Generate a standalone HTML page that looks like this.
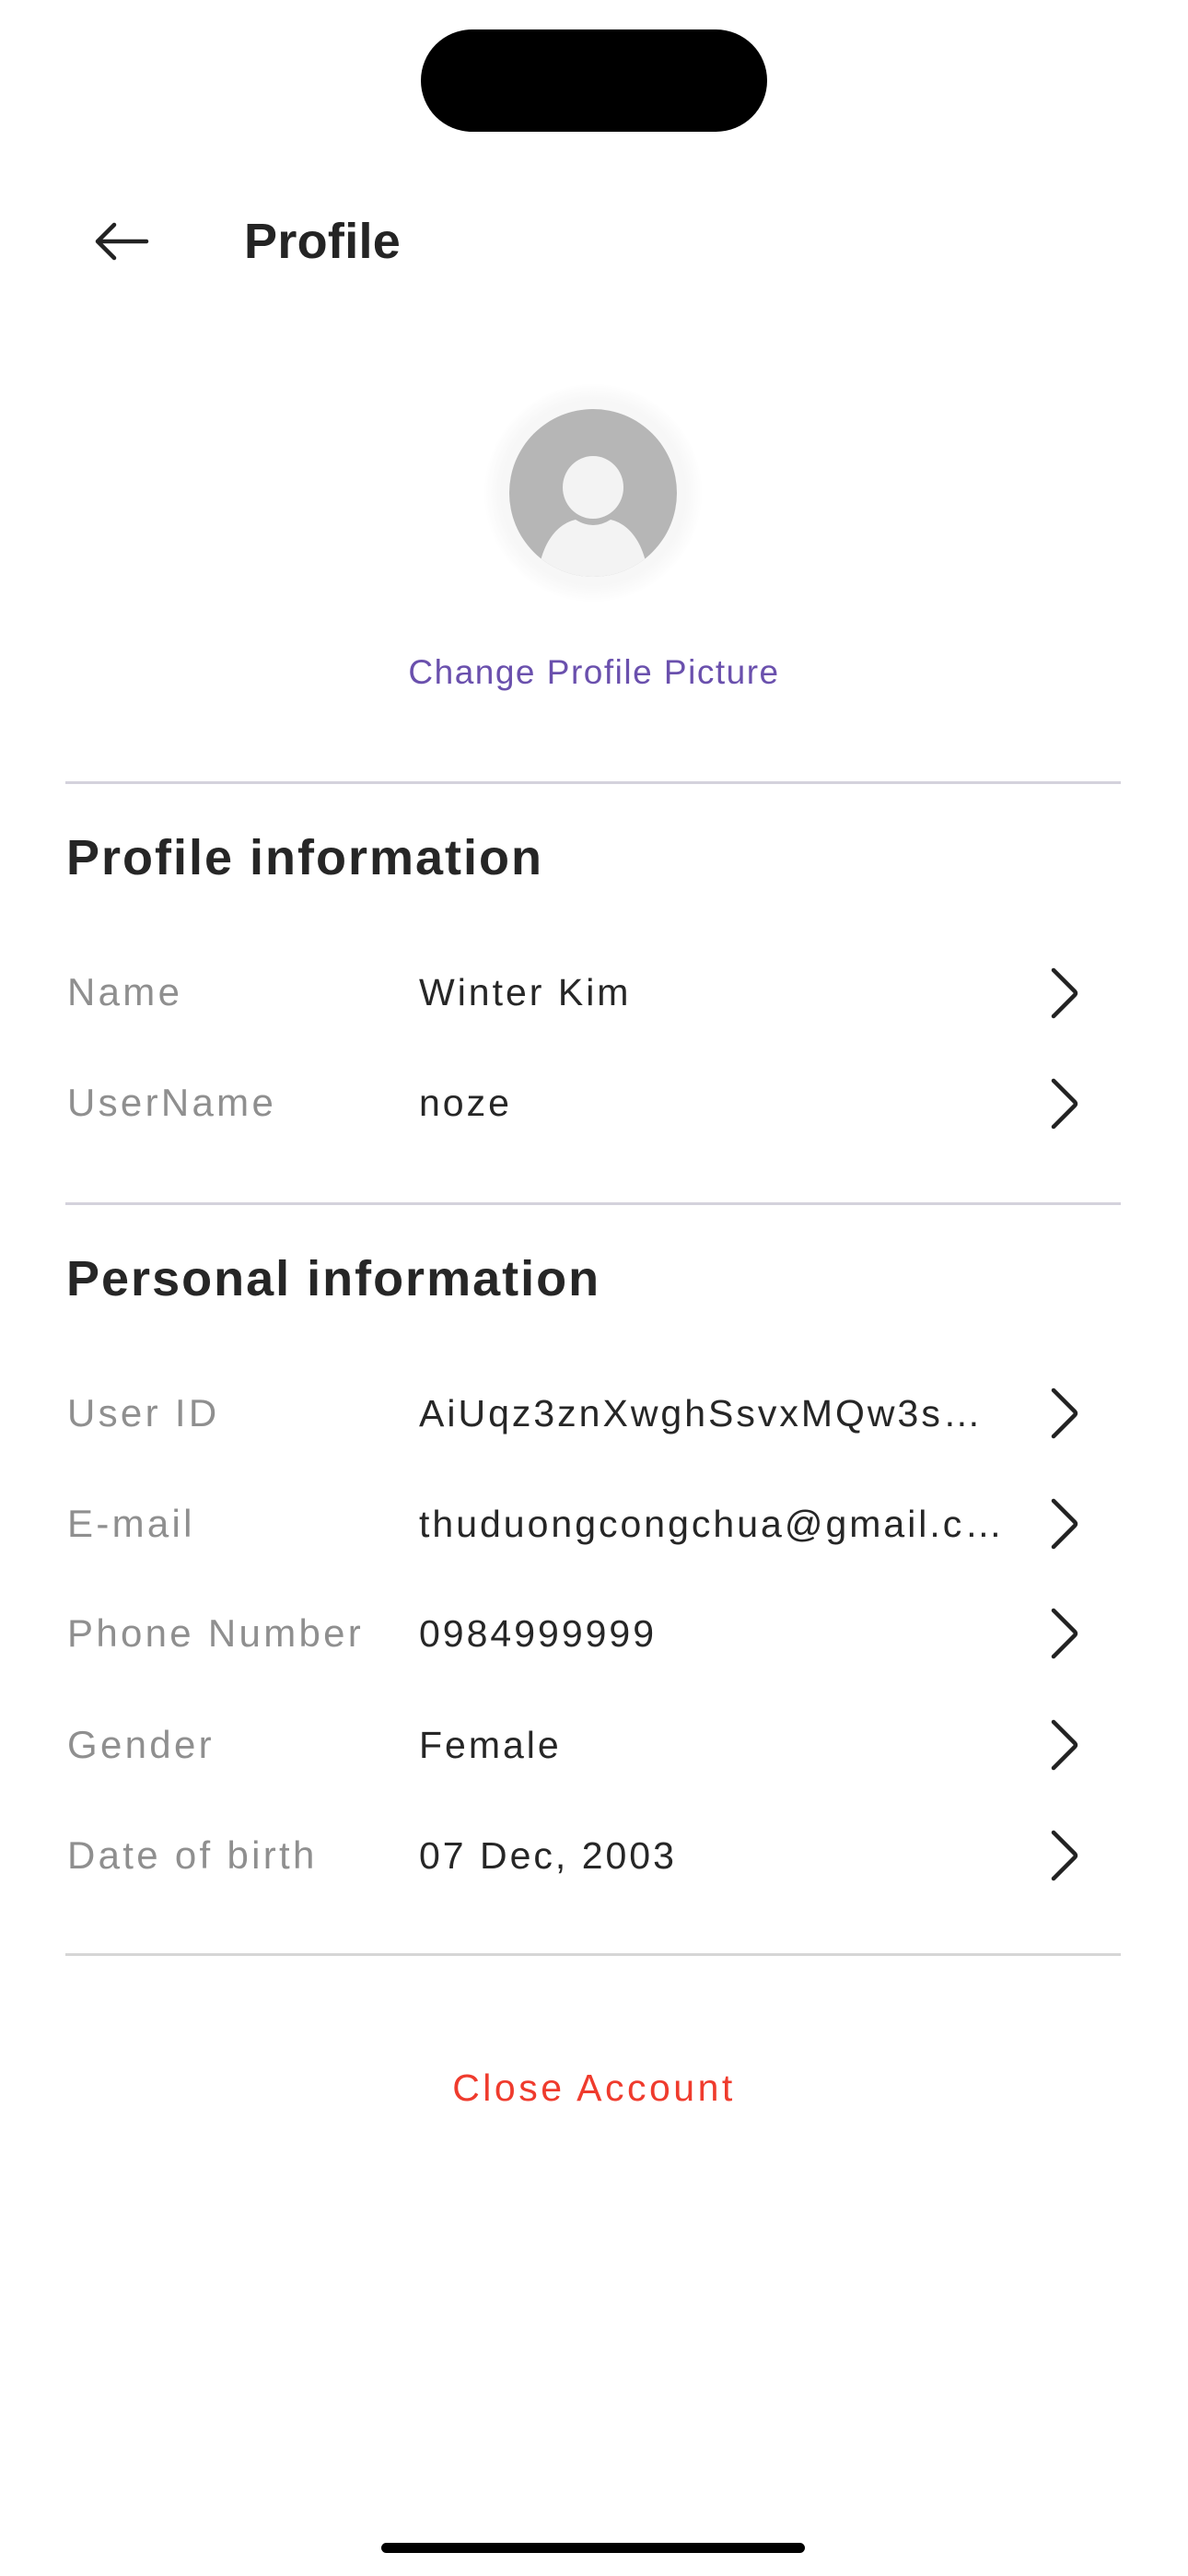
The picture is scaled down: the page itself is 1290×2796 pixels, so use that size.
<!DOCTYPE html>
<html><head><meta charset="utf-8"><style>
*{margin:0;padding:0;box-sizing:border-box}
html,body{width:1290px;height:2796px;background:#fff;overflow:hidden;font-family:"Liberation Sans",sans-serif;color:#222}
.abs{position:absolute}
.island{left:457px;top:32px;width:376px;height:111px;background:#000;border-radius:56px}
.title{left:265px;top:228px;font-size:54px;font-weight:bold;letter-spacing:0.3px;line-height:68px;color:#242424}
.cpp{left:0;width:1290px;text-align:center;top:708px;font-size:37px;letter-spacing:1.5px;color:#6a50ad;line-height:44px}
.line{left:71px;width:1146px;height:3px;background:#d4d2dc}
.h{left:72px;font-size:54px;font-weight:bold;letter-spacing:2px;color:#262626;line-height:64px}
.lab{left:73px;font-size:42px;letter-spacing:3.3px;color:#8f8f8f;line-height:48px}
.val{left:455px;width:640px;font-size:41px;letter-spacing:3px;color:#262626;line-height:48px;white-space:nowrap;overflow:hidden;text-overflow:ellipsis}
.chev{left:1136px;width:40px;height:60px}
.close{left:0;width:1290px;text-align:center;top:2242px;font-size:41px;letter-spacing:3.5px;color:#ef3b2d;line-height:48px}
.home{left:414px;top:2760px;width:460px;height:11px;border-radius:6px;background:#000}
</style></head><body>
<div class="abs island"></div>
<svg class="abs" style="left:100px;top:238px" width="64" height="48" viewBox="0 0 64 48"><path d="M59 24H6M24 6L6 24L24 42" fill="none" stroke="#222" stroke-width="4.5" stroke-linecap="round" stroke-linejoin="round"/></svg>
<div class="abs title">Profile</div>

<div class="abs" style="left:526px;top:417px;width:236px;height:236px;border-radius:50%;background:radial-gradient(circle,#f7f7f7 60%,#fff 72%)"></div>
<svg class="abs" style="left:553px;top:444px" width="182" height="182" viewBox="0 0 182 182">
<defs><clipPath id="c"><circle cx="91" cy="91" r="91"/></clipPath></defs>
<circle cx="91" cy="91" r="91" fill="#b6b6b6"/>
<g clip-path="url(#c)" fill="#f3f3f3">
<ellipse cx="91" cy="85" rx="33" ry="34"/>
<path d="M30 200 C30 150 50 125 72 120 Q91 132 110 120 C132 125 152 150 152 200Z"/>
</g></svg>
<div class="abs cpp">Change Profile Picture</div>

<div class="abs line" style="top:848px"></div>
<div class="abs h" style="top:899px">Profile information</div>
<div class="abs lab" style="top:1053px">Name</div><div class="abs val" style="top:1053px">Winter Kim</div>
<div class="abs lab" style="top:1173px">UserName</div><div class="abs val" style="top:1173px">noze</div>

<div class="abs line" style="top:1305px"></div>
<div class="abs h" style="top:1356px">Personal information</div>
<div class="abs lab" style="top:1510px">User ID</div><div class="abs val" style="top:1510px">AiUqz3znXwghSsvxMQw3sALxyzabc</div>
<div class="abs lab" style="top:1630px">E-mail</div><div class="abs val" style="top:1630px">thuduongcongchua@gmail.com</div>
<div class="abs lab" style="top:1749px">Phone Number</div><div class="abs val" style="top:1749px">0984999999</div>
<div class="abs lab" style="top:1870px">Gender</div><div class="abs val" style="top:1870px">Female</div>
<div class="abs lab" style="top:1990px">Date of birth</div><div class="abs val" style="top:1990px">07 Dec, 2003</div>

<svg class="abs chev" style="top:1048px" viewBox="0 0 40 60"><path d="M8 5L31 28Q33 30 31 32L8 55" fill="none" stroke="#222" stroke-width="4.5" stroke-linecap="round"/></svg>
<svg class="abs chev" style="top:1168px" viewBox="0 0 40 60"><path d="M8 5L31 28Q33 30 31 32L8 55" fill="none" stroke="#222" stroke-width="4.5" stroke-linecap="round"/></svg>
<svg class="abs chev" style="top:1504px" viewBox="0 0 40 60"><path d="M8 5L31 28Q33 30 31 32L8 55" fill="none" stroke="#222" stroke-width="4.5" stroke-linecap="round"/></svg>
<svg class="abs chev" style="top:1624px" viewBox="0 0 40 60"><path d="M8 5L31 28Q33 30 31 32L8 55" fill="none" stroke="#222" stroke-width="4.5" stroke-linecap="round"/></svg>
<svg class="abs chev" style="top:1743px" viewBox="0 0 40 60"><path d="M8 5L31 28Q33 30 31 32L8 55" fill="none" stroke="#222" stroke-width="4.5" stroke-linecap="round"/></svg>
<svg class="abs chev" style="top:1864px" viewBox="0 0 40 60"><path d="M8 5L31 28Q33 30 31 32L8 55" fill="none" stroke="#222" stroke-width="4.5" stroke-linecap="round"/></svg>
<svg class="abs chev" style="top:1984px" viewBox="0 0 40 60"><path d="M8 5L31 28Q33 30 31 32L8 55" fill="none" stroke="#222" stroke-width="4.5" stroke-linecap="round"/></svg>

<div class="abs line" style="top:2120px;background:#d6d6d6"></div>
<div class="abs close">Close Account</div>
<div class="abs home"></div>
</body></html>
